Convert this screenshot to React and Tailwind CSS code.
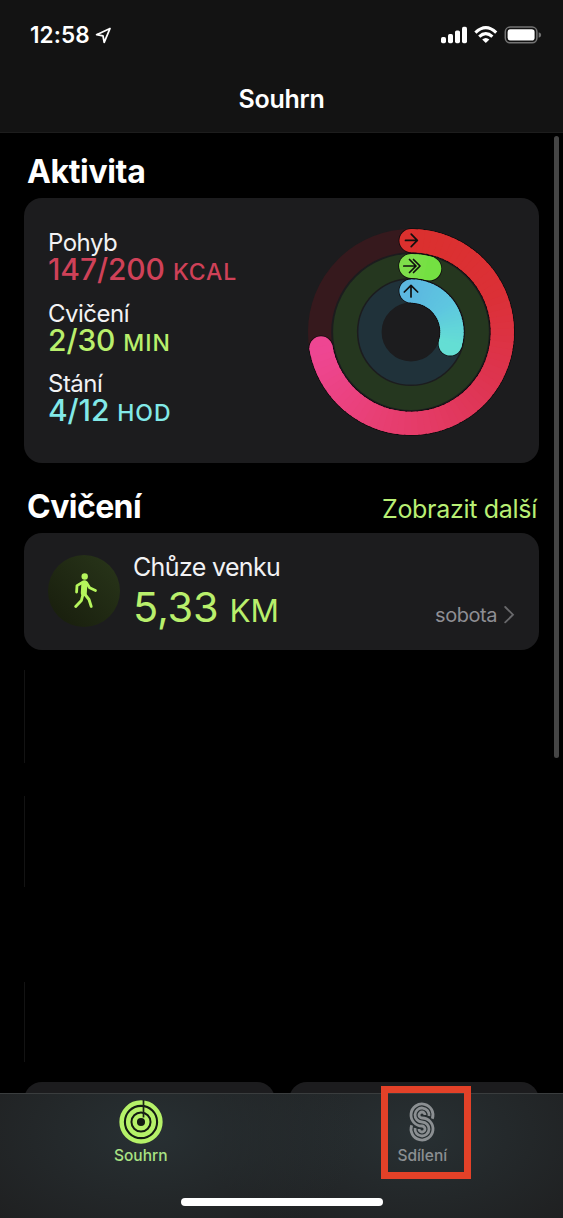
const CX = 104;
const CY = 104;

function point(r, deg) {
  const a = ((deg - 90) * Math.PI) / 180;
  return [CX + r * Math.cos(a), CY + r * Math.sin(a)];
}

function arc(r, from, to) {
  const [x1, y1] = point(r, from);
  const [x2, y2] = point(r, to);
  return `M${x1} ${y1}A${r} ${r} 0 ${to - from > 180 ? 1 : 0} 1 ${x2} ${y2}`;
}

function mix(stops, t) {
  const n = stops.length - 1;
  const i = Math.min(Math.floor(t * n), n - 1);
  const f = t * n - i;
  const c = stops[i].map((v, k) => Math.round(v + (stops[i + 1][k] - v) * f));
  return `rgb(${c.join(',')})`;
}

function Ring({ r, width, end, track, stops }) {
  const steps = Math.ceil(end / 4);
  const step = end / steps;
  const [x1, y1] = point(r, 0);
  const [x2, y2] = point(r, end);
  return (
    <g fill="none">
      <circle cx={CX} cy={CY} r={r} stroke={track} strokeWidth={width} />
      <path d={arc(r, 0, end)} stroke="#0b0507" strokeOpacity="0.8" strokeWidth={width + 1.6} strokeLinecap="round" />
      <circle cx={x1} cy={y1} r={width / 2} fill={mix(stops, 0)} />
      <circle cx={x2} cy={y2} r={width / 2} fill={mix(stops, 1)} />
      {Array.from({ length: steps }, (_, i) => (
        <path
          key={i}
          d={arc(r, i * step, Math.min((i + 1) * step + 3, end + 1))}
          stroke={mix(stops, steps > 1 ? i / (steps - 1) : 0)}
          strokeWidth={width}
        />
      ))}
    </g>
  );
}

function ActivityRings() {
  return (
    <svg className="h-52 w-52 shrink-0" viewBox="0 0 208 208">
      <Ring r={91.4} width={23.2} end={260} track="#36191d" stops={[[219, 48, 46], [219, 48, 54], [222, 53, 84], [231, 62, 112], [238, 70, 146]]} />
      <Ring r={66} width={23.8} end={16.2} track="#25371f" stops={[[126, 222, 74], [116, 224, 66]]} />
      <Ring r={41} width={23.2} end={107} track="#20323a" stops={[[92, 184, 224], [94, 198, 224], [100, 222, 212]]} />
      <g fill="none" stroke="#10100f" strokeWidth="1.7" strokeLinecap="round" strokeLinejoin="round">
        <path d="M98.500 12.400H110.300M104.200 6.200L110.300 12.400L104.200 18.600" />
        <path d="M96.800 38H109M102.500 31.500L109 38L102.500 44.500M106.500 31.500L113 38L106.500 44.500" />
        <path d="M104 69V57.600M97.300 64L104 57.400L110.700 64" />
      </g>
    </svg>
  );
}

function Metric({ label, value, unit, color }) {
  return (
    <div className="h-[70.5px]">
      <div className="h-[25px] text-[24px] leading-[25px] tracking-[-0.5px] text-[#f2f2f4]">{label}</div>
      <div className={`flex h-[29px] items-baseline gap-[8px] font-medium leading-[29px] ${color}`}>
        <span className="text-[30px] tracking-[-0.1px]">{value}</span>
        <span className="text-[23px] tracking-[0.9px]">{unit}</span>
      </div>
    </div>
  );
}

function StatusBar() {
  return (
    <div className="flex h-[70px] items-center pl-[30px] pr-[21px]">
      <span className="w-[60px] text-[22.5px] font-semibold tracking-[0.1px]">12:58</span>
      <svg className="ml-[5px] h-[17px] w-[17px]" viewBox="0 0 17 17" fill="none" stroke="white" strokeWidth="1.8" strokeLinejoin="round">
        <path d="M15 1.500L1.600 7.700L8 8.800L9.200 15.300Z" />
      </svg>
      <svg className="ml-auto h-[18px] w-[102px]" viewBox="0 0 102 18" fill="white">
        <rect x="1" y="11" width="5" height="6.200" rx="1.700" />
        <rect x="8" y="8" width="5" height="9.200" rx="1.700" />
        <rect x="15" y="4.400" width="5" height="12.800" rx="1.700" />
        <rect x="22" y="0.700" width="5" height="16.500" rx="1.700" />
        <g fill="none" stroke="white" strokeWidth="3.100">
          <path d="M35.400 6.700Q45.800 -3.300 56.200 6.700" />
          <path d="M39.200 10.600Q45.800 4.600 52.400 10.600" />
        </g>
        <path d="M42.200 13.400Q45.800 10.400 49.400 13.400L45.800 17Z" />
        <rect x="65.300" y="1" width="31.600" height="15.800" rx="4.800" fill="none" stroke="#747474" strokeWidth="1.500" />
        <rect x="67.600" y="3.200" width="27" height="11.400" rx="2.800" />
        <path d="M98.700 6.200Q101.200 7 101.200 9T98.700 11.800Z" fill="#747474" />
      </svg>
    </div>
  );
}

function WalkIcon() {
  return (
    <svg className="h-[72px] w-[72px]" viewBox="0 0 72 72">
      <defs>
        <linearGradient id="walkBg" x1="0" y1="1" x2="1" y2="0">
          <stop offset="0" stopColor="#171c0c" />
          <stop offset="1" stopColor="#29361a" />
        </linearGradient>
      </defs>
      <circle cx="36" cy="36" r="36" fill="url(#walkBg)" />
      <circle cx="36.700" cy="21.500" r="3.200" fill="#b5f55c" />
      <g fill="none" stroke="#b5f55c" strokeLinecap="round" strokeLinejoin="round">
        <path d="M36.400 28.300L35.800 38" strokeWidth="6" />
        <path d="M34.800 27.200L29 30.600L28.600 37" strokeWidth="2.800" />
        <path d="M38.400 27.600L41.600 32.800L47.500 35.500" strokeWidth="2.800" />
        <path d="M34.800 40L33.400 45.500L27.700 51.400" strokeWidth="2.900" />
        <path d="M37 39.500L41 44.500L43.200 51.400" strokeWidth="2.900" />
      </g>
    </svg>
  );
}

function SummaryIcon() {
  return (
    <svg className="h-11 w-11" viewBox="0 0 44 44" fill="none" stroke="#b5f168" strokeWidth="4.500">
      <circle cx="22" cy="22" r="21" fill="#131b12" stroke="none" />
      <circle cx="22" cy="22" r="19.400" />
      <circle cx="22" cy="22" r="12.800" />
      <circle cx="22" cy="22" r="6.300" />
      <path d="M24.500 0V17.500" stroke="#1a2219" strokeWidth="1.700" />
    </svg>
  );
}

function SharingIcon() {
  return (
    <svg className="h-11 w-[28px]" viewBox="0 0 28 44" fill="none" stroke="#8b8f92" strokeWidth="2.800">
      <path d="M24.340 18.760A11 11 0 1 0 14 26A3 3 0 1 1 11 29" />
      <path d="M20.930 16A7 7 0 1 0 14 22A7 7 0 1 1 7.070 28" />
      <path d="M17 15A3 3 0 1 0 14 18A11 11 0 1 1 3.660 25.240" />
    </svg>
  );
}

export default function App() {
  return (
    <div className="relative flex h-[1218px] w-[563px] flex-col overflow-hidden bg-black font-[Inter,'Liberation_Sans',sans-serif] text-white">
      <header className="h-[133px] shrink-0 border-b border-[#1d1d1d] bg-[#131313]">
        <StatusBar />
        <h1 className="pt-[11px] text-center text-[25px] font-semibold leading-9 tracking-[-0.3px]">Souhrn</h1>
      </header>

      <main className="flex min-h-0 flex-1 flex-col px-6">
        <h2 className="h-[65px] pl-[3px] pt-[19px] text-[32px] font-bold leading-[40px] tracking-[-0.35px]">Aktivita</h2>
        <section className="flex h-[265px] shrink-0 justify-between rounded-[18px] bg-[#1c1c1e] pl-6 pr-[24px]">
          <div className="pt-[32px]">
            <Metric label="Pohyb" value="147/200" unit="KCAL" color="text-[#cf4158]" />
            <Metric label="Cvičení" value="2/30" unit="MIN" color="text-[#b9ef6c]" />
            <Metric label="Stání" value="4/12" unit="HOD" color="text-[#82e9e8]" />
          </div>
          <div className="pt-[29.5px]">
            <ActivityRings />
          </div>
        </section>

        <div className="flex h-[70px] shrink-0 items-baseline justify-between pl-[3px] pr-[2px] pt-[24px]">
          <h2 className="text-[32px] font-bold leading-[40px] tracking-[-0.6px]">Cvičení</h2>
          <a className="text-[25px] tracking-[-0.3px] text-[#b9ef74]">Zobrazit další</a>
        </div>
        <section className="flex h-[117px] shrink-0 rounded-[18px] bg-[#1c1c1e] pl-6 pr-[24px] pt-[22px]">
          <WalkIcon />
          <div className="ml-[13px]">
            <div className="h-6 text-[25px] leading-6 tracking-[-0.65px] text-[#f2f2f4]">Chůze venku</div>
            <div className="flex h-[56px] items-baseline gap-[11px] leading-[56px] text-[#b9ef6c]">
              <span className="text-[41.5px] tracking-[-0.2px]">5,33</span>
              <span className="text-[31.5px]">KM</span>
            </div>
          </div>
          <div className="mt-[47px] ml-auto flex h-[26px] items-center gap-[7px] text-[20px] tracking-[-0.45px] text-[#8e8e93]">
            <span>sobota</span>
            <svg className="h-5 w-[11px]" viewBox="0 0 11 20" fill="none" stroke="#68686b" strokeWidth="1.800" strokeLinecap="round">
              <path d="M1.200 2L9 9.700L1.200 17.400" />
            </svg>
          </div>
        </section>

        <div className="flex flex-col pt-[20px]">
          <div className="h-[93px] w-px bg-[#131313]" />
          <div className="mt-[33px] h-[91px] w-px bg-[#131313]" />
          <div className="mt-[95px] h-[80px] w-px bg-[#131313]" />
        </div>

        <div className="mt-auto flex h-[11px] shrink-0 justify-between overflow-hidden">
          <div className="h-20 w-[251px] rounded-[18px] bg-[#1c1c1e]" />
          <div className="h-20 w-[250px] rounded-[18px] bg-[#1c1c1e]" />
        </div>
      </main>

      <footer className="flex h-[125px] shrink-0 flex-col items-center border-t border-[#3a3d3e] bg-[#1f2021] bg-[radial-gradient(ellipse_210px_120px_at_150px_40px,#283033,transparent),radial-gradient(ellipse_210px_120px_at_415px_40px,#283033,transparent)]">
        <nav className="grid h-[104px] w-full grid-cols-2 text-[15.5px] font-medium">
          <div className="flex flex-col items-center pt-[6px] text-[#a9e283]">
            <SummaryIcon />
            <span className="mt-[1px] leading-[22px]">Souhrn</span>
          </div>
          <div className="flex flex-col items-center pt-[6px] text-[#8b8f92]">
            <SharingIcon />
            <span className="mt-[1px] leading-[22px]">Sdílení</span>
          </div>
        </nav>
        <div className="h-2 w-[202px] rounded-full bg-white" />
      </footer>

      <div className="absolute left-[554px] top-[136px] h-[622px] w-[5px] rounded-full bg-[#454545]" />
      <div className="absolute left-[381px] top-[1086px] h-[93px] w-[90px] border-[7px] border-[#e34128]" />
    </div>
  );
}
